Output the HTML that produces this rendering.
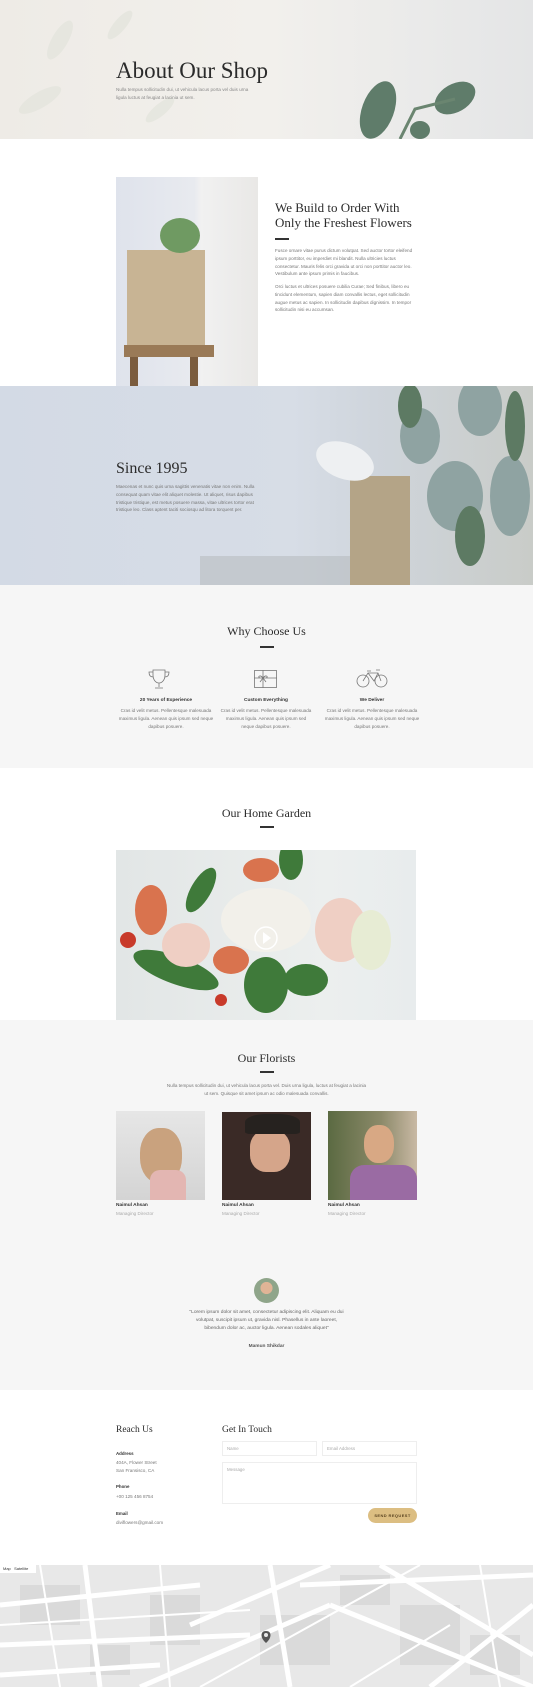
<!DOCTYPE html>
<html><head><meta charset="utf-8"><style>
*{margin:0;padding:0;box-sizing:border-box}
body{width:533px;height:1687px;font-family:"Liberation Sans",sans-serif;color:#666;background:#fff;position:relative;overflow:hidden}
.a{position:absolute}
.serif{font-family:"Liberation Serif",serif;color:#2b2b2b}
.t{font-size:4.6px;line-height:7.8px;color:#777}
.div{position:absolute;height:1.5px;width:14px;background:#333}
.c{text-align:center}
</style></head><body>
<div class="a" style="left:0;top:0;width:533px;height:139px;background:linear-gradient(90deg,#eeebe6 0%,#f2f0ec 50%,#ebebea 75%,#e4e5e6 100%)"></div>
<svg class="a" style="left:0;top:0" width="533" height="139">
<g fill="#e1e3da" opacity=".6"><ellipse cx="60" cy="40" rx="8" ry="22" transform="rotate(30 60 40)"/><ellipse cx="120" cy="25" rx="6" ry="18" transform="rotate(40 120 25)"/><ellipse cx="40" cy="100" rx="8" ry="24" transform="rotate(60 40 100)"/><ellipse cx="160" cy="110" rx="6" ry="18" transform="rotate(50 160 110)"/></g>
<g fill="#5f7c6a"><ellipse cx="378" cy="110" rx="16" ry="30" transform="rotate(20 378 110)"/><ellipse cx="455" cy="98" rx="22" ry="14" transform="rotate(-30 455 98)"/><ellipse cx="420" cy="130" rx="10" ry="9"/><path d="M400 139l15-30 40-10" stroke="#6a8570" stroke-width="3" fill="none"/></g>
</svg>
<div class="a serif" style="left:116px;top:58px;font-size:23px">About Our Shop</div>
<div class="a t" style="left:116px;top:86px;width:140px;color:#888">Nulla tempus sollicitudin dui, ut vehicula lacus porta vel duis urna ligula luctus at feugiat a lacinia ut sem.</div>
<div class="a" style="left:116px;top:177px;width:142px;height:209px;background:linear-gradient(90deg,#dfe3ec 0%,#e8eaef 55%,#f1f1f1 60%,#e9e8e6 100%)"></div>
<div class="a" style="left:127px;top:250px;width:78px;height:103px;background:#c8b494"></div>
<div class="a" style="left:124px;top:345px;width:90px;height:12px;background:#9a7a57"></div>
<div class="a" style="left:130px;top:357px;width:8px;height:29px;background:#7b5c3e"></div>
<div class="a" style="left:190px;top:357px;width:8px;height:29px;background:#7b5c3e"></div>
<div class="a" style="left:160px;top:218px;width:40px;height:35px;background:#6f9a62;border-radius:50%"></div>
<div class="a serif" style="left:275px;top:200px;font-size:13px;line-height:15px">We Build to Order With<br>Only the Freshest Flowers</div>
<div class="div" style="left:275px;top:238px"></div>
<div class="a t" style="left:275px;top:247px;width:140px">Fusce ornare vitae purus dictum volutpat. Sed auctor tortor eleifend ipsum porttitor, eu imperdiet mi blandit. Nulla ultricies luctus consectetur. Mauris felis orci gravida ut orci non porttitor auctor leo. Vestibulum ante ipsum primis in faucibus.</div>
<div class="a t" style="left:275px;top:283px;width:140px">Orci luctus et ultrices posuere cubilia Curae; Sed finibus, libero eu tincidunt elementum, sapien diam convallis lectus, eget sollicitudin augue metus ac sapien. In sollicitudin dapibus dignissim. In tempor sollicitudin nisi eu accumsan.</div>
<div class="a" style="left:0;top:386px;width:533px;height:199px;background:linear-gradient(90deg,#d3dae5 0%,#d7dde6 55%,#cfd5dc 70%,#c9ccc8 100%)"></div>
<svg class="a" style="left:0;top:386px" width="533" height="199">
<rect x="350" y="90" width="60" height="109" fill="#b4a487"/>
<ellipse cx="345" cy="75" rx="30" ry="18" fill="#eef0f2" transform="rotate(20 345 75)"/>
<g fill="#8fa3a2"><ellipse cx="420" cy="50" rx="20" ry="28"/><ellipse cx="480" cy="20" rx="22" ry="30"/><ellipse cx="455" cy="110" rx="28" ry="35"/><ellipse cx="510" cy="110" rx="20" ry="40"/></g>
<g fill="#5d7a63"><ellipse cx="410" cy="20" rx="12" ry="22"/><ellipse cx="515" cy="40" rx="10" ry="35"/><ellipse cx="470" cy="150" rx="15" ry="30"/></g>
<rect x="200" y="170" width="150" height="29" fill="#b8bcc0" opacity=".6"/>
</svg>
<div class="a serif" style="left:116px;top:460px;font-size:16px">Since 1995</div>
<div class="a t" style="left:116px;top:483px;width:145px">Maecenas et nunc quis urna sagittis venenatis vitae non enim. Nulla consequat quam vitae elit aliquet molestie. Ut aliquet, risus dapibus tristique tristique, est metus posuere massa, vitae ultrices tortor erat tristique leo. Class aptent taciti sociosqu ad litora torquent per.</div>
<div class="a" style="left:0;top:585px;width:533px;height:183px;background:#f6f6f6"></div>
<div class="a serif c" style="left:0;width:533px;top:624px;font-size:12px">Why Choose Us</div>
<div class="div" style="left:260px;top:646px"></div>
<svg class="a" style="left:148px;top:669px" width="24" height="20" fill="none" stroke="#777" stroke-width=".8"><path d="M5 1h12v5c0 5-3 8-6 8s-6-3-6-8zM5 3H1c0 4 2 5 4 5M17 3h4c0 4-2 5-4 5M11 14v4M7 19h8"/></svg>
<svg class="a" style="left:254px;top:670px" width="24" height="19" fill="none" stroke="#777" stroke-width=".8"><rect x=".5" y=".5" width="22" height="17"/><path d="M9 0v18M0 8h23M9 8c-3-4-6-1-3 0M9 8c3-4 6-1 3 0M9 8l-3 4M9 8l3 4"/></svg>
<svg class="a" style="left:356px;top:669px" width="32" height="20" fill="none" stroke="#777" stroke-width=".8"><circle cx="7" cy="12" r="6"/><circle cx="25" cy="12" r="6"/><path d="M7 12l5-8h10l3 8M12 4l6 8 4-8M11 2h4M20 1h4"/></svg>
<div class="a c" style="left:116px;top:698px;width:100px;font-size:4.8px;font-weight:bold;color:#333">20 Years of Experience</div>
<div class="a c" style="left:216px;top:698px;width:100px;font-size:4.8px;font-weight:bold;color:#333">Custom Everything</div>
<div class="a c" style="left:322px;top:698px;width:100px;font-size:4.8px;font-weight:bold;color:#333">We Deliver</div>
<div class="a t c" style="left:116px;top:707px;width:100px">Cras id velit metus. Pellentesque malesuada maximus ligula. Aenean quis ipsum sed neque dapibus posuere.</div>
<div class="a t c" style="left:219px;top:707px;width:94px">Cras id velit metus. Pellentesque malesuada maximus ligula. Aenean quis ipsum sed neque dapibus posuere.</div>
<div class="a t c" style="left:322px;top:707px;width:100px">Cras id velit metus. Pellentesque malesuada maximus ligula. Aenean quis ipsum sed neque dapibus posuere.</div>
<div class="a serif c" style="left:0;width:533px;top:806px;font-size:12px">Our Home Garden</div>
<div class="div" style="left:260px;top:826px"></div>
<div class="a" style="left:116px;top:850px;width:300px;height:170px;background:linear-gradient(90deg,#e2e6e6,#ecefee 70%,#e8eced)"></div>
<svg class="a" style="left:116px;top:850px" width="300" height="170">
<g fill="#3f7a3a"><ellipse cx="60" cy="120" rx="45" ry="14" transform="rotate(20 60 120)"/><ellipse cx="150" cy="135" rx="22" ry="28"/><ellipse cx="190" cy="130" rx="22" ry="16"/><ellipse cx="85" cy="40" rx="10" ry="25" transform="rotate(30 85 40)"/><ellipse cx="175" cy="10" rx="12" ry="20"/></g>
<g fill="#f2f0ea"><ellipse cx="150" cy="70" rx="45" ry="32"/></g>
<g fill="#efcfc4"><ellipse cx="70" cy="95" rx="24" ry="22"/><ellipse cx="225" cy="80" rx="26" ry="32"/></g>
<g fill="#d9734e"><ellipse cx="35" cy="60" rx="16" ry="25"/><ellipse cx="115" cy="110" rx="18" ry="14"/><ellipse cx="145" cy="20" rx="18" ry="12"/></g>
<g fill="#c83a2a"><circle cx="12" cy="90" r="8"/><circle cx="105" cy="150" r="6"/></g>
<ellipse cx="255" cy="90" rx="20" ry="30" fill="#e7ecd4"/>
<circle cx="150" cy="88" r="11" fill="none" stroke="#fff" stroke-width="1.5"/><path d="M147 82l8 6-8 6z" fill="#fff"/>
</svg>
<div class="a" style="left:0;top:1020px;width:533px;height:370px;background:#f6f6f6"></div>
<div class="a serif c" style="left:0;width:533px;top:1051px;font-size:12px">Our Florists</div>
<div class="div" style="left:260px;top:1071px"></div>
<div class="a t c" style="left:166px;top:1082px;width:201px">Nulla tempus sollicitudin dui, ut vehicula lacus porta vel. Duis urna ligula, luctus at feugiat a lacinia ut sem. Quisque sit amet ipsum ac odio malesuada convallis.</div>
<div class="a" style="left:116px;top:1111px;width:89px;height:89px;background:linear-gradient(#e6e6e6,#d4d4d4)"></div>
<div class="a" style="left:140px;top:1128px;width:42px;height:55px;border-radius:45%;background:#c9a27e"></div>
<div class="a" style="left:150px;top:1170px;width:36px;height:30px;background:#e3b6b2;border-radius:10px 10px 0 0"></div>
<div class="a" style="left:222px;top:1112px;width:89px;height:88px;background:#3a2a26"></div>
<div class="a" style="left:250px;top:1130px;width:40px;height:42px;border-radius:40%;background:#d5a58a"></div>
<div class="a" style="left:245px;top:1114px;width:55px;height:20px;border-radius:40% 40% 10% 10%;background:#26221f"></div>
<div class="a" style="left:328px;top:1111px;width:89px;height:89px;background:linear-gradient(90deg,#5b6a42,#8c8a6a 60%,#c9b9a4)"></div>
<div class="a" style="left:364px;top:1125px;width:30px;height:38px;border-radius:45%;background:#d8a884"></div>
<div class="a" style="left:350px;top:1165px;width:67px;height:35px;border-radius:14px 14px 0 0;background:#9a6ba3"></div>
<div class="a" style="left:116px;top:1203px;font-size:4.8px;font-weight:bold;color:#333">Naimul Ahsan</div>
<div class="a" style="left:222px;top:1203px;font-size:4.8px;font-weight:bold;color:#333">Naimul Ahsan</div>
<div class="a" style="left:328px;top:1203px;font-size:4.8px;font-weight:bold;color:#333">Naimul Ahsan</div>
<div class="a" style="left:116px;top:1211px;font-size:4.6px;color:#aaa">Managing Director</div>
<div class="a" style="left:222px;top:1211px;font-size:4.6px;color:#aaa">Managing Director</div>
<div class="a" style="left:328px;top:1211px;font-size:4.6px;color:#aaa">Managing Director</div>
<div class="a" style="left:254px;top:1278px;width:25px;height:25px;border-radius:50%;background:radial-gradient(circle at 50% 40%,#e0b496 30%,#8fa58a 32%)"></div>
<div class="a t c" style="left:186px;top:1309px;width:161px;font-size:4.9px;color:#666">"Lorem ipsum dolor sit amet, consectetur adipiscing elit. Aliquam eu dui volutpat, suscipit ipsum ut, gravida nisl. Phasellus in ante laoreet, bibendum dolor ac, auctor ligula. Aenean sodales aliquet"</div>
<div class="a c" style="left:0;width:533px;top:1344px;font-size:4.8px;font-weight:bold;color:#555">Mamun Shikdar</div>
<div class="a serif" style="left:116px;top:1425px;font-size:9.5px">Reach Us</div>
<div class="a serif" style="left:222px;top:1425px;font-size:9.5px">Get In Touch</div>
<div class="a" style="left:116px;top:1450px;font-size:4.4px;font-weight:bold;color:#333;line-height:8px">Address</div>
<div class="a t" style="left:116px;top:1459px">404A, Flower Street<br>San Fransisco, CA</div>
<div class="a" style="left:116px;top:1484px;font-size:4.4px;font-weight:bold;color:#333">Phone</div>
<div class="a t" style="left:116px;top:1493px">+00 125 456 8754</div>
<div class="a" style="left:116px;top:1511px;font-size:4.4px;font-weight:bold;color:#333">Email</div>
<div class="a t" style="left:116px;top:1519px">diviflowers@gmail.com</div>
<div class="a" style="left:222px;top:1441px;width:95px;height:15px;border:1px solid #eee;font-size:4.4px;color:#aaa;padding:4px 4px">Name</div>
<div class="a" style="left:322px;top:1441px;width:95px;height:15px;border:1px solid #eee;font-size:4.4px;color:#aaa;padding:4px 4px">Email Address</div>
<div class="a" style="left:222px;top:1462px;width:195px;height:42px;border:1px solid #eee;font-size:4.4px;color:#aaa;padding:4px 4px">Message</div>
<div class="a" style="left:368px;top:1508px;width:49px;height:15px;border-radius:8px;background:#dcbe82;font-size:4px;font-weight:bold;color:#5a4320;text-align:center;line-height:15px;letter-spacing:.4px">SEND REQUEST</div>
<div class="a" style="left:0;top:1565px;width:533px;height:122px;background:#e8e8e8"></div>
<svg class="a" style="left:0;top:1565px" width="533" height="122">
<g fill="#dadada"><rect x="20" y="20" width="60" height="40"/><rect x="150" y="30" width="50" height="50"/><rect x="260" y="50" width="70" height="50"/><rect x="400" y="40" width="60" height="60"/><rect x="90" y="80" width="40" height="30"/><rect x="340" y="10" width="50" height="30"/><rect x="470" y="70" width="50" height="40"/></g>
<g stroke="#fff" stroke-width="5" fill="none"><path d="M0 40L200 20M0 80L250 70M0 110L160 100M85 0L100 122M270 0L290 122M190 60L330 0M140 122L330 40M330 40L533 122M380 0L533 90M430 122L533 40M300 20L533 10"/></g>
<g stroke="#fff" stroke-width="2" fill="none"><path d="M0 60L250 45M40 0L60 122M160 0L170 122M200 122L420 0M350 122L450 60M480 0L500 122"/></g>
<path d="M266 66c-6 0-6 7 0 12 6-5 6-12 0-12z" fill="#555"/><circle cx="266" cy="70" r="2" fill="#e8e8e8"/>
<rect x="0" y="0" width="36" height="8" fill="#fff"/>
</svg>
<div class="a" style="left:3px;top:1566px;font-size:4px;color:#333">Map &nbsp; Satellite</div>
</body></html>
